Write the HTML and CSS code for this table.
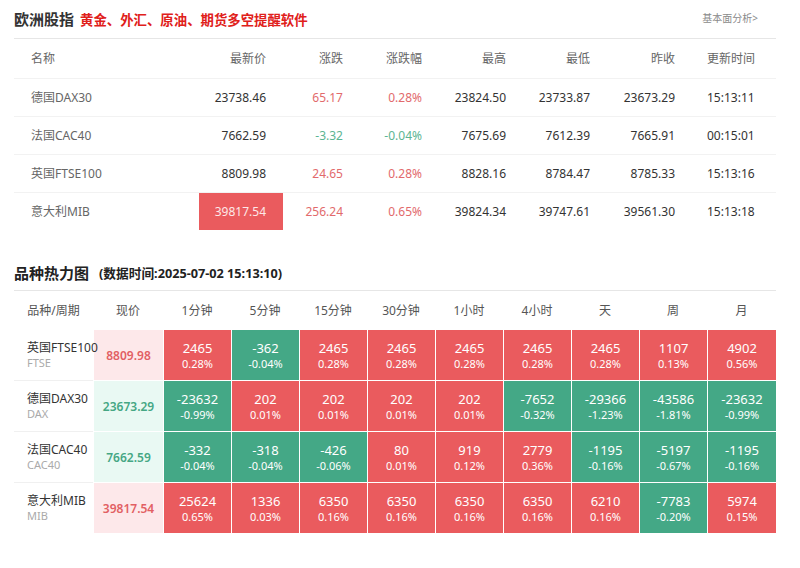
FILE: index.html
```html
<!DOCTYPE html>
<html lang="zh">
<head>
<meta charset="utf-8">
<title>欧洲股指</title>
<link rel="stylesheet" href="styles.css">
</head>
<body>
<div class="page">
  <div class="head">
    <div class="title"><span class="t-main">欧洲股指</span><span class="t-ad">黄金、外汇、原油、期货多空提醒软件</span></div>
    <a class="more">基本面分析&gt;</a>
  </div>
  <table class="quotes">
    <colgroup>
      <col class="c-name"><col class="c84"><col class="c77"><col class="c79"><col class="c84"><col class="c84"><col class="c85"><col class="c84">
    </colgroup>
    <thead>
      <tr><th class="l">名称</th><th>最新价</th><th>涨跌</th><th>涨跌幅</th><th>最高</th><th>最低</th><th>昨收</th><th class="time">更新时间</th></tr>
    </thead>
    <tbody>
      <tr><td class="l name">德国DAX30</td><td>23738.46</td><td class="up">65.17</td><td class="up">0.28%</td><td>23824.50</td><td>23733.87</td><td>23673.29</td><td class="time">15:13:11</td></tr>
      <tr><td class="l name">法国CAC40</td><td>7662.59</td><td class="down">-3.32</td><td class="down">-0.04%</td><td>7675.69</td><td>7612.39</td><td>7665.91</td><td class="time">00:15:01</td></tr>
      <tr><td class="l name">英国FTSE100</td><td>8809.98</td><td class="up">24.65</td><td class="up">0.28%</td><td>8828.16</td><td>8784.47</td><td>8785.33</td><td class="time">15:13:16</td></tr>
      <tr class="last"><td class="l name">意大利MIB</td><td class="flash">39817.54</td><td class="up">256.24</td><td class="up">0.65%</td><td>39824.34</td><td>39747.61</td><td>39561.30</td><td class="time">15:13:18</td></tr>
    </tbody>
  </table>

  <div class="heat-title"><span class="h-main">品种热力图</span><span class="h-sub">(数据时间:2025-07-02 15:13:10)</span></div>
  <table class="heat">
    <colgroup>
      <col class="h-name"><col class="h-price"><col class="h-c"><col class="h-c"><col class="h-c"><col class="h-c"><col class="h-c"><col class="h-c"><col class="h-c"><col class="h-c"><col class="h-last">
    </colgroup>
    <thead>
      <tr><th>品种/周期</th><th>现价</th><th>1分钟</th><th>5分钟</th><th>15分钟</th><th>30分钟</th><th>1小时</th><th>4小时</th><th>天</th><th>周</th><th>月</th></tr>
    </thead>
    <tbody>
      <tr>
        <td class="nm"><div class="n1">英国FTSE100</div><div class="n2">FTSE</div></td>
        <td class="pr pr-up">8809.98</td>
        <td class="r"><b>2465</b><i>0.28%</i></td>
        <td class="g"><b>-362</b><i>-0.04%</i></td>
        <td class="r"><b>2465</b><i>0.28%</i></td>
        <td class="r"><b>2465</b><i>0.28%</i></td>
        <td class="r"><b>2465</b><i>0.28%</i></td>
        <td class="r"><b>2465</b><i>0.28%</i></td>
        <td class="r"><b>2465</b><i>0.28%</i></td>
        <td class="r"><b>1107</b><i>0.13%</i></td>
        <td class="r"><b>4902</b><i>0.56%</i></td>
      </tr>
      <tr>
        <td class="nm"><div class="n1">德国DAX30</div><div class="n2">DAX</div></td>
        <td class="pr pr-down">23673.29</td>
        <td class="g"><b>-23632</b><i>-0.99%</i></td>
        <td class="r"><b>202</b><i>0.01%</i></td>
        <td class="r"><b>202</b><i>0.01%</i></td>
        <td class="r"><b>202</b><i>0.01%</i></td>
        <td class="r"><b>202</b><i>0.01%</i></td>
        <td class="g"><b>-7652</b><i>-0.32%</i></td>
        <td class="g"><b>-29366</b><i>-1.23%</i></td>
        <td class="g"><b>-43586</b><i>-1.81%</i></td>
        <td class="g"><b>-23632</b><i>-0.99%</i></td>
      </tr>
      <tr>
        <td class="nm"><div class="n1">法国CAC40</div><div class="n2">CAC40</div></td>
        <td class="pr pr-down">7662.59</td>
        <td class="g"><b>-332</b><i>-0.04%</i></td>
        <td class="g"><b>-318</b><i>-0.04%</i></td>
        <td class="g"><b>-426</b><i>-0.06%</i></td>
        <td class="r"><b>80</b><i>0.01%</i></td>
        <td class="r"><b>919</b><i>0.12%</i></td>
        <td class="r"><b>2779</b><i>0.36%</i></td>
        <td class="g"><b>-1195</b><i>-0.16%</i></td>
        <td class="g"><b>-5197</b><i>-0.67%</i></td>
        <td class="g"><b>-1195</b><i>-0.16%</i></td>
      </tr>
      <tr>
        <td class="nm"><div class="n1">意大利MIB</div><div class="n2">MIB</div></td>
        <td class="pr pr-up">39817.54</td>
        <td class="r"><b>25624</b><i>0.65%</i></td>
        <td class="r"><b>1336</b><i>0.03%</i></td>
        <td class="r"><b>6350</b><i>0.16%</i></td>
        <td class="r"><b>6350</b><i>0.16%</i></td>
        <td class="r"><b>6350</b><i>0.16%</i></td>
        <td class="r"><b>6350</b><i>0.16%</i></td>
        <td class="r"><b>6210</b><i>0.16%</i></td>
        <td class="g"><b>-7783</b><i>-0.20%</i></td>
        <td class="r"><b>5974</b><i>0.15%</i></td>
      </tr>
    </tbody>
  </table>
</div>
</body>
</html>
```

FILE: styles.css
```css
* { box-sizing: border-box; }
html, body { margin: 0; padding: 0; background: #fff; }
body {
  font-family: "Noto Sans", "Noto Sans CJK SC", sans-serif;
  color: #333;
  font-size: 12px;
}
.page {
  width: 762px;
  margin-left: 14px;
}
.head {
  height: 39px;
  border-bottom: 1px solid #e6e6e6;
  display: flex;
  justify-content: space-between;
  align-items: center;
  padding-bottom: 2px;
}
.title { display: flex; align-items: baseline; }
.t-main {
  font-size: 15px;
  font-weight: 700;
  color: #333;
}
.t-ad {
  font-size: 13.4px;
  font-weight: 700;
  color: #e0201a;
  margin-left: 6px;
}
.more {
  font-size: 10px;
  color: #8a8a8a;
  margin-right: 18px;
  margin-top: -1px;
}

/* quotes table */
.quotes {
  width: 762px;
  border-collapse: collapse;
  table-layout: fixed;
}
.c-name { width: 185px; }
.c84 { width: 84px; }
.c77 { width: 77px; }
.c79 { width: 79px; }
.c85 { width: 85px; }
.quotes th, .quotes td {
  text-align: right;
  padding: 0 17px 0 0;
  font-weight: 400;
  white-space: nowrap;
}
.quotes th {
  height: 39px;
  color: #666;
  font-size: 12px;
  border-bottom: 1px solid #f2f2f2;
}
.quotes td {
  height: 38px;
  font-size: 12px;
  color: #333;
  border-bottom: 1px solid #f2f2f2;
}
.quotes tr.last td { border-bottom: none; }
.quotes .l { text-align: left; padding: 0 0 0 17px; }
.quotes .name { color: #666; }
.quotes .time { text-align: left; padding: 0 0 0 15px; }
.quotes .up { color: #e26a6c; }
.quotes .down { color: #5cb592; }
.quotes td.flash {
  background: #ea5b5e;
  color: #fde8e8;
}

/* heat map */
.heat-title {
  margin-top: 25px;
  height: 36px;
  border-bottom: 1px solid #e6e6e6;
  display: flex;
  align-items: center;
  padding-bottom: 1px;
}
.h-main { font-size: 15px; font-weight: 700; color: #222; }
.h-sub { font-size: 12.7px; font-weight: 700; color: #222; margin-left: 10px; }

.heat {
  width: 762px;
  border-collapse: separate;
  border-spacing: 0;
  table-layout: fixed;
}
.h-name { width: 79px; }
.h-price { width: 70px; }
.h-c { width: 68px; }
.h-last { width: 69px; }
.heat th {
  height: 38px;
  font-weight: 400;
  color: #555;
  font-size: 12px;
  text-align: center;
  padding: 0;
}
.heat td {
  height: 51px;
  padding: 0;
  text-align: center;
  border-top: 1px solid #fff;
  border-left: 1px solid #fff;
}
.heat td.nm {
  text-align: left;
  padding-left: 13px;
  border-left: none;
  border-top: 1px solid #f0f0f0;
  white-space: nowrap;
}
.heat tbody tr:first-child td.nm { border-top: 1px solid #fff; }
.n1 { font-size: 12px; color: #333; line-height: 15px; }
.n2 { font-size: 11px; color: #aaa; line-height: 15px; }
.heat td.pr {
  font-size: 12px;
  font-weight: 600;
}
.pr-up { background: #fde8ea; color: #e25f63; }
.pr-down { background: #e9f9f3; color: #45a784; }
.heat td.r { background: #ea5b5e; color: #fff; }
.heat td.g { background: #44a886; color: #fff; }
.heat td b {
  display: block;
  font-weight: 400;
  font-size: 13px;
  line-height: 16px;
}
.heat td i {
  display: block;
  font-style: normal;
  font-size: 11px;
  line-height: 14px;
  margin-top: 1px;
}
```
